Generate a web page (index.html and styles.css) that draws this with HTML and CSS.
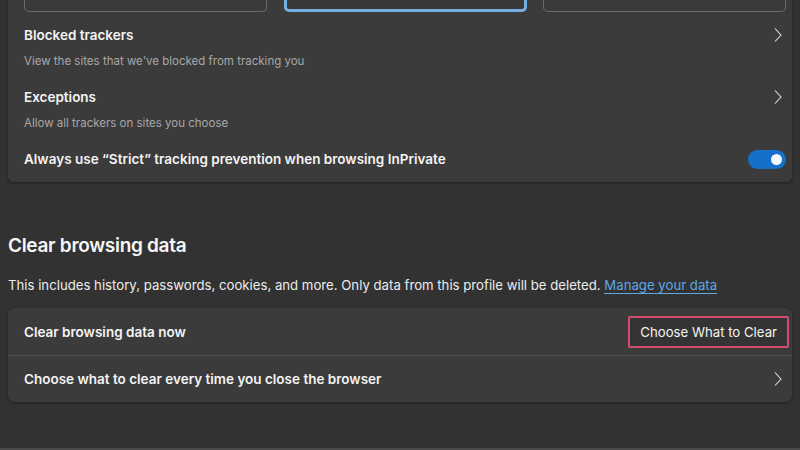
FILE: index.html
```html
<!DOCTYPE html>
<html lang="en">
<head>
<meta charset="utf-8">
<title>Privacy settings</title>
<link rel="stylesheet" href="styles.css">
</head>
<body>
<main class="page">
  <section class="card card-top">
    <div class="options">
      <div class="option"></div>
      <div class="option option-selected"></div>
      <div class="option"></div>
    </div>
    <div class="rows">
      <div class="row">
        <div class="row-text">
          <div class="row-title">Blocked trackers</div>
          <div class="row-sub">View the sites that we've blocked from tracking you</div>
        </div>
        <svg class="chev" width="10" height="16" viewBox="0 0 10 16"><path d="M2 1.5 L8 8 L2 14.5" fill="none" stroke="#dcdcdc" stroke-width="1.1"/></svg>
      </div>
      <div class="row">
        <div class="row-text">
          <div class="row-title">Exceptions</div>
          <div class="row-sub">Allow all trackers on sites you choose</div>
        </div>
        <svg class="chev" width="10" height="16" viewBox="0 0 10 16"><path d="M2 1.5 L8 8 L2 14.5" fill="none" stroke="#dcdcdc" stroke-width="1.1"/></svg>
      </div>
      <div class="row row-center">
        <div class="row-title">Always use “Strict” tracking prevention when browsing InPrivate</div>
        <span class="toggle"><span class="knob"></span></span>
      </div>
    </div>
  </section>

  <h2 class="heading">Clear browsing data</h2>
  <p class="desc">This includes history, passwords, cookies, and more. Only data from this profile will be deleted. <a class="link" href="#">Manage your data</a></p>

  <section class="card card-list">
    <div class="list-row list-row-btn">
      <div class="row-title">Clear browsing data now</div>
      <button class="btn">Choose What to Clear</button>
    </div>
    <div class="list-row">
      <div class="row-title">Choose what to clear every time you close the browser</div>
      <svg class="chev" width="10" height="16" viewBox="0 0 10 16"><path d="M2 1.5 L8 8 L2 14.5" fill="none" stroke="#dcdcdc" stroke-width="1.1"/></svg>
    </div>
  </section>
</main>
</body>
</html>
```

FILE: styles.css
```css
* { box-sizing: border-box; }
html, body {
  margin: 0;
  height: 100%;
  background: #323232;
  overflow: hidden;
}
body {
  font-family: Inter, "Open Sans", "Liberation Sans", sans-serif;
  color: #f2f2f2;
  border-bottom: 2px solid #4a4a4a;
}
.page {
  padding: 0 8px;
}
.card {
  background: #3b3b3b;
  border-radius: 6px;
  box-shadow: 0 1px 3px rgba(0,0,0,0.35);
}
.card-top {
  margin-top: -60px;
  padding: 0 6px 13px 16px;
}
.options {
  display: grid;
  grid-template-columns: 243px 243px 243px;
  justify-content: space-between;
  height: 72px;
}
.option {
  border: 1px solid #6b6b6b;
  border-top: none;
  border-radius: 0 0 5px 5px;
  background: #3a3a3a;
}
.option-selected {
  border: 3px solid #74aee2;
  border-top: none;
  background: #383838;
}
.rows {
  margin-top: 13px;
  display: flex;
  flex-direction: column;
  gap: 17px;
}
.row {
  display: flex;
  justify-content: space-between;
  align-items: flex-start;
}
.row-center { align-items: center; }
.row-text {
  display: flex;
  flex-direction: column;
  gap: 7px;
}
.row-title {
  font-size: 13.5px;
  line-height: 20px;
  font-weight: 600;
  color: #f4f4f4;
}
.row-sub {
  font-size: 11.5px;
  line-height: 18px;
  color: #a8a8a8;
}
.chev {
  margin-top: 2px;
  margin-right: 3px;
  flex: none;
}
.toggle {
  width: 38px;
  height: 19px;
  border-radius: 10px;
  background: #1470c8;
  display: flex;
  align-items: center;
  justify-content: flex-end;
  padding-right: 4px;
}
.knob {
  width: 11px;
  height: 11px;
  border-radius: 50%;
  background: #f4f8ff;
}
.heading {
  margin: 50px 0 0;
  font-size: 19px;
  letter-spacing: -0.3px;
  line-height: 28px;
  font-weight: 600;
  color: #f6f6f6;
}
.desc {
  margin: 15px 0 13px;
  font-size: 13.2px;
  line-height: 20px;
  color: #ececec;
}
.link {
  color: #5fa7e6;
  text-decoration: underline;
  text-underline-offset: 3px;
}
.card-list {
  display: flex;
  flex-direction: column;
}
.list-row {
  height: 47px;
  display: flex;
  align-items: center;
  justify-content: space-between;
  padding: 0 8px 0 16px;
}
.list-row + .list-row {
  border-top: 1px solid #4d4d4d;
}
.list-row-btn {
  padding-right: 3px;
}
.btn {
  font-family: inherit;
  font-size: 13.2px;
  color: #f4f4f4;
  background: #343434;
  border: 2px solid #d24d6c;
  border-radius: 2px;
  height: 32px;
  padding: 0 10px;
}
.list-row .chev { margin-top: 0; margin-right: 1px; }
```
